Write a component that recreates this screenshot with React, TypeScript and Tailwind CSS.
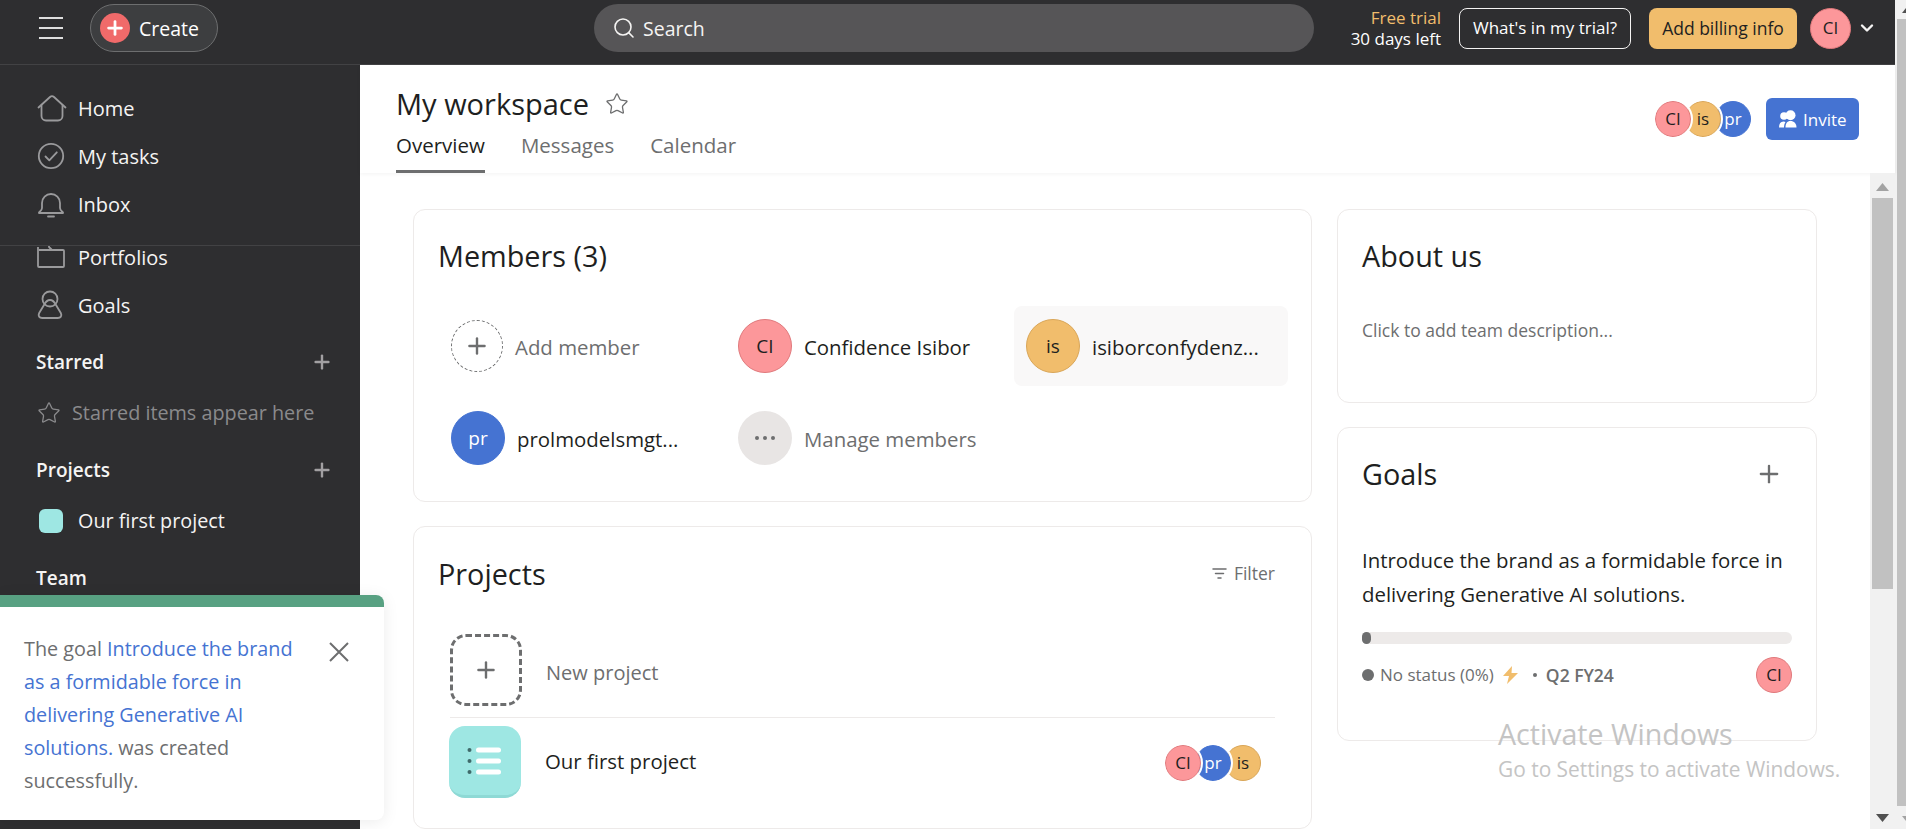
import React from "react";
import { Search, Star, Plus } from "lucide-react";

function Avatar({ t, c, size = "w-[36px] h-[36px] text-[17px]", ring = false }: { t: string; c: "ci" | "is" | "pr"; size?: string; ring?: boolean }) {
  const col = c === "ci" ? "bg-[#fc979a] text-[#1e1f21] border-[#e0797c]" : c === "is" ? "bg-[#f1bd6c] text-[#1e1f21] border-[#d9a658]" : "bg-[#4573d2] text-white border-[#4573d2]";
  return (
    <div className={`${size} ${col} ${ring ? "outline-2 outline-white" : ""} rounded-full border flex items-center justify-center shrink-0`}>
      {t}
    </div>
  );
}

function HomeIcon() {
  return (
    <svg width="30" height="28" viewBox="0 0 30 28" fill="none" stroke="#9a9a9c" strokeWidth="1.8" strokeLinejoin="round" strokeLinecap="round">
      <path d="M1.5 13.5 13 3a3 3 0 0 1 4 0l11.500 10.500" />
      <path d="M4.500 11.500V22a4.500 4.500 0 0 0 4.500 4.500h12a4.500 4.500 0 0 0 4.500-4.500V11.500" />
    </svg>
  );
}
function TaskIcon() {
  return (
    <svg width="28" height="28" viewBox="0 0 28 28" fill="none" stroke="#9a9a9c" strokeWidth="1.8" strokeLinecap="round" strokeLinejoin="round">
      <circle cx="14" cy="14" r="12.2" />
      <path d="m8.500 14.500 3.800 3.800 7.500-8" />
    </svg>
  );
}
function BellIcon() {
  return (
    <svg width="28" height="28" viewBox="0 0 28 28" fill="none" stroke="#9a9a9c" strokeWidth="1.8" strokeLinecap="round" strokeLinejoin="round">
      <path d="M5 13a9 9 0 0 1 18 0v5c0 2 1.500 3 3 4.500v.5H2v-.5C3.500 21 5 20 5 18z" />
      <path d="M11 26.500h6" />
    </svg>
  );
}
function FolderIcon() {
  return (
    <svg width="28" height="22" viewBox="0 0 28 22" fill="none" stroke="#9a9a9c" strokeWidth="1.8" strokeLinejoin="round">
      <path d="M2 4h24a1 1 0 0 1 1 1v15a1 1 0 0 1-1 1H2a1 1 0 0 1-1-1V1" />
      <path d="M12 0v1l3 3" />
    </svg>
  );
}
function GoalIcon() {
  return (
    <svg width="26" height="30" viewBox="0 0 26 30" fill="none" stroke="#9a9a9c" strokeWidth="1.8" strokeLinejoin="round">
      <circle cx="13" cy="9" r="7.500" />
      <path d="M13 10c-3 0-4.500 2-6 5l-4.800 8c-1.500 3 .3 5 3 5h15.600c2.700 0 4.500-2 3-5l-4.800-8c-1.500-3-3-5-6-5z" />
    </svg>
  );
}

function NavItem({ icon, label }: { icon: React.ReactNode; label: string }) {
  return (
    <div className="h-[48px] pl-[37px] flex items-center text-[#f5f4f3] text-[20px]">
      <span className="w-[41px] shrink-0 flex items-center">{icon}</span>
      <span className="pt-[1px]">{label}</span>
    </div>
  );
}

function SideTitle({ label, plus = false, className }: { label: string; plus?: boolean; className: string }) {
  return (
    <div className={`h-[48px] pl-[36px] pr-[27px] flex items-center justify-between text-[#f5f4f3] text-[19px] font-semibold ${className}`}>
      <span>{label}</span>
      {plus && <Plus size={22} strokeWidth={2.600} color="#a2a0a2" />}
    </div>
  );
}

function Card({ className, children }: { className: string; children: React.ReactNode }) {
  return <section className={`rounded-[12px] border border-[#edeae9] bg-white ${className}`}>{children}</section>;
}

function Member({ avatar, label, muted = false, hl = false }: { avatar: React.ReactNode; label: string; muted?: boolean; hl?: boolean }) {
  return (
    <div className={`h-[80px] rounded-[8px] pl-[12px] flex items-center gap-[12px] text-[20.400px] font-medium ${hl ? "bg-[#f9f8f8]" : ""} ${muted ? "text-[#6d6e6f]" : "text-[#1e1f21]"}`}>
      {avatar}
      <span className="whitespace-nowrap pt-[2px]">{label}</span>
    </div>
  );
}

export default function App() {
  return (
    <div className="h-[829px] w-[1906px] overflow-hidden flex bg-white font-['Open_Sans','Noto_Sans',sans-serif] relative">
      <div className="w-[1895px] flex flex-col shrink-0">
        <header className="h-[65px] shrink-0 bg-[#2e2e30] border-b border-[#424244] flex items-center pb-[8px] text-white">
          <div className="ml-[39px] w-[24px] flex flex-col gap-[8px]">
            <span className="h-[2px] bg-[#dedede]" />
            <span className="h-[2px] bg-[#dedede]" />
            <span className="h-[2px] bg-[#dedede]" />
          </div>
          <div className="ml-[27px] w-[128px] h-[48px] rounded-full border border-[#6d6e6f] bg-[#3d3e40] flex items-center pl-[9px] gap-[9px] text-[19.500px]">
            <span className="w-[30px] h-[30px] rounded-full bg-[#f06a6a] flex items-center justify-center"><Plus size={22} strokeWidth={3} color="#fff" /></span>
            <span className="pt-[2px]">Create</span>
          </div>
          <div className="ml-[376px] w-[720px] h-[48px] rounded-full bg-[#565557] flex items-center pl-[18px] gap-[7px] text-[19.500px] text-[#f5f4f3]">
            <Search size={24} strokeWidth={1.600} color="#f5f4f3" />
            <span className="pt-[2px]">Search</span>
          </div>
          <div className="ml-auto flex flex-col items-end text-[17px] leading-[21px] w-[120px]">
            <span className="text-[#f1bd6c]">Free trial</span>
            <span>30 days left</span>
          </div>
          <div className="ml-[18px] w-[172px] h-[41px] rounded-[8px] border border-[#f5f4f3] flex items-center justify-center text-[17px]">What's in my trial?</div>
          <div className="ml-[18px] w-[148px] h-[41px] rounded-[8px] bg-[#f1bd6c] text-[#1e1f21] flex items-center justify-center text-[17.500px]">Add billing info</div>
          <div className="ml-[13px]"><Avatar t="CI" c="ci" size="w-[41px] h-[41px] text-[17px]" /></div>
          <svg className="ml-[9px]" width="14" height="10" viewBox="0 0 14 10" fill="none" stroke="#f5f4f3" strokeWidth="2.400" strokeLinecap="round" strokeLinejoin="round"><path d="m2 2.500 5 5 5-5" /></svg>
          <span className="w-[21px]" />
        </header>
        <div className="flex-1 flex min-h-0 relative">
          <aside className="w-[360px] shrink-0 bg-[#2e2e30] flex flex-col overflow-hidden">
            <div className="h-[181px] shrink-0 pt-[19px] border-b border-[#424244]">
              <NavItem icon={<HomeIcon />} label="Home" />
              <NavItem icon={<TaskIcon />} label="My tasks" />
              <NavItem icon={<BellIcon />} label="Inbox" />
            </div>
            <div className="flex-1 overflow-hidden">
              <div className="-mt-[13px]">
                <NavItem icon={<FolderIcon />} label="Portfolios" />
                <NavItem icon={<GoalIcon />} label="Goals" />
                <SideTitle label="Starred" plus className="mt-[9px]" />
                <div className="h-[48px] mt-[3px] pl-[37px] flex items-center text-[19.800px] text-[#8a8a8c]">
                  <Star size={24} strokeWidth={1.300} color="#8a8a8c" />
                  <span className="ml-[11px]">Starred items appear here</span>
                </div>
                <SideTitle label="Projects" plus className="mt-[9px]" />
                <div className="h-[48px] mt-[3px] pl-[39px] flex items-center text-[19.800px] text-[#f5f4f3]">
                  <span className="w-[24px] h-[24px] rounded-[6px] bg-[#9ee7e3]" />
                  <span className="ml-[15px]">Our first project</span>
                </div>
                <SideTitle label="Team" className="mt-[9px]" />
              </div>
            </div>
          </aside>
          <main className="flex-1 min-w-0 flex flex-col">
            <div className="h-[108px] shrink-0 shadow-[0_1px_4px_rgba(0,0,0,0.05)] px-[36px] bg-white flex justify-between">
              <div>
                <div className="flex items-center pt-[17px] h-[60px]">
                  <h1 className="text-[29px] font-medium text-[#1e1f21]">My workspace</h1>
                  <Star className="ml-[16px]" size={24} strokeWidth={1.300} color="#6d6e6f" />
                </div>
                <nav className="flex gap-[36px] text-[20.500px] font-medium text-[#6d6e6f]">
                  <span className="text-[#1e1f21] border-b-[3px] border-[#6d6e6f] h-[48px] pt-[5px]">Overview</span>
                  <span className="pt-[5px]">Messages</span>
                  <span className="pt-[5px]">Calendar</span>
                </nav>
              </div>
              <div className="flex items-start pt-[33px]">
                <div className="flex -space-x-[6px] mt-[3px] text-[17px]">
                  <div className="z-30"><Avatar t="CI" c="ci" ring /></div>
                  <div className="z-20"><Avatar t="is" c="is" ring /></div>
                  <div className="z-10"><Avatar t="pr" c="pr" /></div>
                </div>
                <div className="ml-[15px] w-[93px] h-[42px] rounded-[6px] bg-[#4573d2] text-white text-[17px] flex items-center pl-[13px] gap-[6px]">
                  <svg width="18" height="18" viewBox="0 0 18 18" fill="#fff"><circle cx="5" cy="6" r="3.800" /><circle cx="11.500" cy="5.200" r="5" /><path d="M0 17.500c0-4 1.500-6 4.500-6 1 0 1.500.2 2 .5-1 1.500-1.500 3.500-1.500 5.500z" /><path d="M6.500 17.500c0-4 1.500-6.500 5-6.500s6 2.500 6 6.500z" /></svg>
                  <span className="pt-[1px]">Invite</span>
                </div>
              </div>
            </div>
            <div className="flex-1 flex min-h-0">
              <div className="flex-1 overflow-hidden pt-[36px] pl-[53px] flex gap-[25px]">
                <div className="w-[899px] flex flex-col gap-[24px] shrink-0">
                  <Card className="h-[294px] px-[24px] pt-[23px]">
                    <h2 className="text-[28.800px] font-medium text-[#1e1f21] h-[47px] leading-[46px]">Members (3)</h2>
                    <div className="grid grid-cols-[287px_288px_274px] gap-y-[12px] mt-[26px] ml-[1px]">
                      <Member muted label="Add member" avatar={<span className="w-[52px] h-[52px] rounded-full border border-dashed border-[#6d6e6f] flex items-center justify-center"><Plus size={26} strokeWidth={2.200} color="#6d6e6f" /></span>} />
                      <Member label="Confidence Isibor" avatar={<Avatar t="CI" c="ci" size="w-[54px] h-[54px] text-[19px]" />} />
                      <Member hl label="isiborconfydenz..." avatar={<Avatar t="is" c="is" size="w-[54px] h-[54px] text-[19px]" />} />
                      <Member label="prolmodelsmgt..." avatar={<Avatar t="pr" c="pr" size="w-[54px] h-[54px] text-[19px]" />} />
                      <Member muted label="Manage members" avatar={<span className="w-[54px] h-[54px] rounded-full bg-[#e8e5e4] flex items-center justify-center gap-[4px]"><i className="w-[4px] h-[4px] rounded-full bg-[#6d6e6f]" /><i className="w-[4px] h-[4px] rounded-full bg-[#6d6e6f]" /><i className="w-[4px] h-[4px] rounded-full bg-[#6d6e6f]" /></span>} />
                    </div>
                  </Card>
                  <Card className="h-[304px] px-[24px] pt-[24px]">
                    <div className="flex items-center justify-between pr-[12px]">
                      <h2 className="text-[28.800px] font-medium text-[#1e1f21] leading-[46px]">Projects</h2>
                      <span className="flex items-center gap-[7px] text-[17.500px] font-medium text-[#6d6e6f] -mt-[2px]">
                        <svg width="15" height="13" viewBox="0 0 15 13" fill="none" stroke="#6d6e6f" strokeWidth="1.500" strokeLinecap="round"><path d="M1 2h13M3.500 6.500h8M6 11h3" /></svg>
                        Filter
                      </span>
                    </div>
                    <div className="ml-[12px] mr-[12px] mt-[37px] h-[84px] border-b border-[#edeae9] flex items-start">
                      <span className="w-[72px] h-[72px] rounded-[16px] border-[3px] border-dashed border-[#6d6e6f] flex items-center justify-center"><Plus size={26} strokeWidth={2.200} color="#6d6e6f" /></span>
                      <span className="ml-[24px] text-[20px] text-[#6d6e6f] mt-[24px]">New project</span>
                    </div>
                    <div className="ml-[11px] mr-[12px] mt-[8px] flex items-center">
                      <span className="w-[72px] h-[72px] rounded-[16px] bg-[#9ee7e3] border-b-[3px] border-[#8ed9d5] flex items-center justify-center">
                        <svg width="36" height="30" viewBox="0 0 36 30" fill="#fff">
                          <circle cx="2.500" cy="4" r="2" fill="#3f6a6a" /><circle cx="2.500" cy="15" r="2" fill="#3f6a6a" /><circle cx="2.500" cy="26" r="2" fill="#3f6a6a" />
                          <rect x="9" y="1.500" width="25" height="5" rx="2.500" /><rect x="9" y="12.500" width="25" height="5" rx="2.500" /><rect x="9" y="23.500" width="25" height="5" rx="2.500" />
                        </svg>
                      </span>
                      <span className="ml-[24px] mb-[2px] text-[20.400px] font-medium text-[#1e1f21]">Our first project</span>
                      <div className="ml-auto mr-[14px] mt-[1px] flex -space-x-[6px] text-[17px]">
                        <div className="z-30"><Avatar t="CI" c="ci" ring /></div>
                        <div className="z-20"><Avatar t="pr" c="pr" ring /></div>
                        <div className="z-10"><Avatar t="is" c="is" /></div>
                      </div>
                    </div>
                  </Card>
                </div>
                <div className="w-[480px] flex flex-col gap-[24px] shrink-0">
                  <Card className="h-[194px] px-[24px] pt-[23px]">
                    <h2 className="text-[28.800px] font-medium text-[#1e1f21] leading-[46px]">About us</h2>
                    <p className="text-[17.500px] text-[#6d6e6f] mt-[38px]">Click to add team description...</p>
                  </Card>
                  <Card className="h-[314px] px-[24px] pt-[23px]">
                    <div className="flex items-center justify-between pr-[9px]">
                      <h2 className="text-[28.800px] font-medium text-[#1e1f21] leading-[46px]">Goals</h2>
                      <Plus size={28} strokeWidth={2} color="#6d6e6f" />
                    </div>
                    <p className="text-[20.400px] leading-[34px] text-[#1e1f21] mt-[46px]">Introduce the brand as a formidable force in delivering Generative AI solutions.</p>
                    <div className="mt-[21px] h-[12px] rounded-full bg-[#edeae9]"><div className="h-[12px] w-[9px] rounded-full bg-[#6d6e6f]" /></div>
                    <div className="mt-[13px] flex items-center text-[17px] text-[#6d6e6f]">
                      <span className="w-[12px] h-[12px] rounded-full bg-[#6d6e6f]" />
                      <span className="ml-[6px]">No status (0%)</span>
                      <svg className="ml-[9px]" width="15" height="18" viewBox="0 0 15 18" fill="#f1bd6c"><path d="M9 0 0 10h6l-2 8 11-11H8.500z" /></svg>
                      <span className="ml-[15px] w-[4px] h-[4px] rounded-full bg-[#6d6e6f]" />
                      <span className="ml-[9px] text-[17.500px] font-semibold">Q2 FY24</span>
                      <div className="ml-auto"><Avatar t="CI" c="ci" /></div>
                    </div>
                  </Card>
                </div>
              </div>
              <div className="w-[25px] shrink-0 bg-[#f1f1f1] flex flex-col items-center">
                <svg className="mt-[10px] mr-[1px]" width="13" height="8" viewBox="0 0 13 8" fill="#a3a3a3"><path d="M6.500 0 13 8H0z" /></svg>
                <div className="mt-[7px] w-[21px] h-[391px] bg-[#c1c1c1]" />
                <svg className="mt-auto mb-[7px] mr-[1px]" width="13" height="8" viewBox="0 0 13 8" fill="#505050"><path d="M0 0h13L6.500 8z" /></svg>
              </div>
            </div>
          </main>
          <div className="absolute left-0 top-[530px] w-[384px] h-[225px] bg-white rounded-tr-[8px] rounded-br-[8px] shadow-[0_2px_16px_rgba(0,0,0,0.08)]">
            <div className="h-[12px] bg-[#58a182] rounded-tr-[8px]" />
            <p className="pl-[24px] pr-[70px] pt-[25px] text-[19.800px] leading-[33px] text-[#6d6e6f]">The goal <span className="text-[#4573d2]">Introduce the brand as a formidable force in delivering Generative AI solutions.</span> was created successfully.</p>
            <svg className="absolute left-[329px] top-[47px]" width="20" height="20" viewBox="0 0 20 20" fill="none" stroke="#6d6e6f" strokeWidth="2"><path d="m1 1 18 18M19 1 1 19" /></svg>
          </div>
        </div>
      </div>
      <div className="w-[11px] shrink-0 bg-[#f1f1f1] overflow-hidden pl-[2px] flex flex-col">
        <svg className="mt-[5px] ml-[5px] shrink-0" width="13" height="8" viewBox="0 0 13 8" fill="#505050"><path d="M6.500 0 13 8H0z" /></svg>
        <div className="mt-[6px] h-[787px] bg-[#c1c1c1] shrink-0" />
        <svg className="mt-[10px] ml-[5px] shrink-0" width="13" height="8" viewBox="0 0 13 8" fill="#a3a3a3"><path d="M0 0h13L6.500 8z" /></svg>
      </div>
      <div className="absolute left-[1498px] top-[715px] text-[28.600px] leading-[38px] text-[#c4c4c4]">Activate Windows</div>
      <div className="absolute left-[1498px] top-[755px] text-[20.900px] leading-[28px] text-[#c4c4c4]">Go to Settings to activate Windows.</div>
    </div>
  );
}
